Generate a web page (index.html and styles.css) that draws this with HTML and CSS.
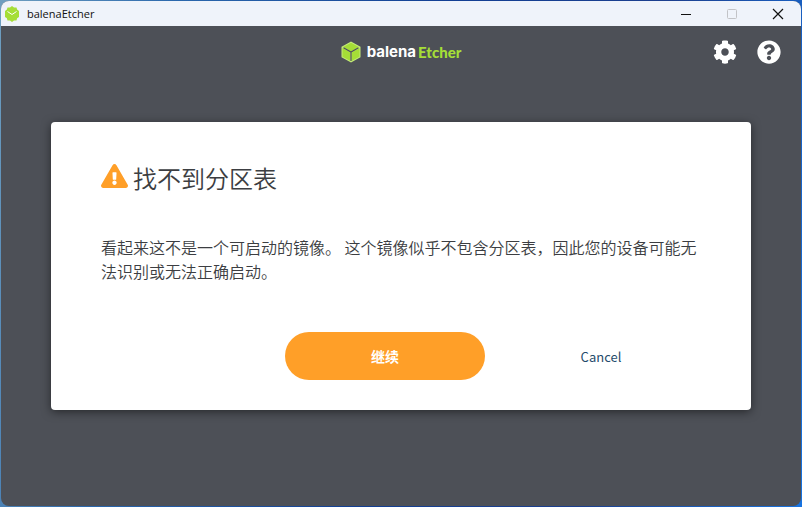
FILE: index.html
```html
<!DOCTYPE html>
<html lang="zh-CN">
<head>
<meta charset="utf-8">
<title>balenaEtcher</title>
<link rel="stylesheet" href="styles.css">
</head>
<body>
<div class="window">
  <header class="titlebar">
    <svg class="app-icon" viewBox="0 0 14 16" aria-hidden="true">
      <path d="M7 0l2 1.500 2.500.1.600 2L14 5v6l-1.900 1.300-.6 2.100-2.500.1L7 16l-2-1.500-2.500-.1-.6-2.100L0 11V5l1.900-1.400.6-2L5 1.500z" fill="#a5de37"/>
      <path d="M2.500 5.500L7 8.500l4.500-3" fill="none" stroke="#fff"/>
    </svg>
    <span class="titlebar-name">balenaEtcher</span>
    <div class="window-controls">
      <button type="button" aria-label="Minimize"><svg viewBox="0 0 12 12"><path d="M1 6.500h10" stroke="#111"/></svg></button>
      <button type="button" aria-label="Maximize" disabled><svg viewBox="0 0 12 12"><rect x="1.500" y="1.500" width="9" height="9" rx="1" fill="none" stroke="#c2c3c7"/></svg></button>
      <button type="button" aria-label="Close"><svg viewBox="0 0 12 12"><path d="M1 1l10 10M11 1L1 11" stroke="#111" stroke-width="1.200"/></svg></button>
    </div>
  </header>
  <div class="toolbar">
    <a class="brand" href="#">
      <svg class="brand-cube" viewBox="0 0 20 22" aria-hidden="true">
        <path d="M10 .5l9.500 5.200v10.600L10 21.500.5 16.300V5.700z" fill="#c5eb79"/>
        <path d="M10 1.800l7.800 4.300L10 10.500 2.200 6.100z" fill="#a5de37"/>
        <path d="M1.500 7l7.900 4.500v8.600l-7.900-4.400zM18.500 7l-7.900 4.500v8.600l7.900-4.400z" fill="#a5de37"/>
        <path d="M2.500 6.800l7.500 4.300 7.500-4.300M10 11.100v8.900" fill="none" stroke="#4d5057" stroke-width="1.200"/>
      </svg>
      <span class="brand-name">balena</span><span class="brand-product">Etcher</span>
    </a>
    <div class="toolbar-actions">
      <button type="button" aria-label="Settings">
        <svg viewBox="0 0 512 512"><path fill="#fff" d="M487.400 315.700l-42.600-24.600c4.300-23.200 4.300-47 0-70.200l42.600-24.600c4.900-2.800 7.100-8.600 5.500-14-11.100-35.600-30-67.800-54.700-94.600-3.800-4.100-10-5.100-14.800-2.300L380.800 110c-17.900-15.400-38.500-27.300-60.800-35.100V25.800c0-5.600-3.900-10.500-9.400-11.700-36.700-8.200-74.300-7.800-109.200 0-5.500 1.200-9.400 6.100-9.400 11.700V75c-22.200 7.900-42.800 19.800-60.800 35.100L88.700 85.500c-4.900-2.800-11-1.900-14.800 2.300-24.700 26.700-43.600 58.900-54.700 94.600-1.700 5.400.6 11.200 5.500 14L67.300 221c-4.300 23.200-4.300 47 0 70.200l-42.600 24.600c-4.900 2.800-7.100 8.600-5.500 14 11.100 35.600 30 67.800 54.700 94.600 3.800 4.100 10 5.100 14.800 2.300l42.600-24.600c17.900 15.400 38.500 27.300 60.800 35.100v49.200c0 5.600 3.900 10.500 9.400 11.700 36.700 8.200 74.300 7.800 109.200 0 5.500-1.200 9.400-6.100 9.400-11.700v-49.200c22.200-7.900 42.800-19.800 60.800-35.100l42.600 24.600c4.900 2.800 11 1.900 14.800-2.300 24.700-26.700 43.600-58.900 54.700-94.600 1.500-5.500-.7-11.300-5.600-14.100zM256 336c-44.100 0-80-35.900-80-80s35.900-80 80-80 80 35.900 80 80-35.900 80-80 80z"/></svg>
      </button>
      <button type="button" aria-label="Help">
        <svg viewBox="0 0 512 512"><path fill="#fff" d="M504 256c0 137-111 248-248 248S8 393 8 256C8 119.100 119 8 256 8s248 111.100 248 248zM262.700 90c-54.500 0-89.300 23-116.500 63.800-3.500 5.300-2.400 12.400 2.700 16.300l34.700 26.300c5.200 3.900 12.600 3 16.700-2.100 17.900-22.700 30.100-35.800 57.300-35.800 20.400 0 45.700 13.100 45.700 33 0 15-12.400 22.700-32.500 34C247.100 238.500 216 254.900 216 296v4c0 6.600 5.400 12 12 12h56c6.600 0 12-5.400 12-12v-1.300c0-28.500 83.200-29.600 83.200-106.700 0-58-60.200-102-116.500-102zM256 338c-25.400 0-46 20.600-46 46s20.600 46 46 46 46-20.600 46-46-20.600-46-46-46z"/></svg>
      </button>
    </div>
  </div>
  <main class="stage">
    <section class="dialog" role="alertdialog" aria-labelledby="dialog-title" aria-describedby="dialog-text">
      <h1 class="dialog-title">
        <svg viewBox="0 0 576 512" aria-hidden="true"><path fill="#ff9f28" d="M569.500 440c18.500 32-4.700 72-41.500 72H48c-36.900 0-60-40.100-41.600-72L246.400 24c18.500-32 64.700-32 83.200 0l239.900 416zM288 354c-25.400 0-46 20.600-46 46s20.600 46 46 46 46-20.600 46-46-20.600-46-46-46zm-43.700-165.300l7.400 136c.4 6.400 5.600 11.300 12 11.300h48.500c6.400 0 11.600-5 12-11.300l7.400-136c.4-6.900-5.100-12.700-12-12.700h-63.400c-6.900 0-12.300 5.800-11.900 12.700z"/></svg>
        <span id="dialog-title">找不到分区表</span>
      </h1>
      <p class="dialog-text" id="dialog-text">看起来这不是一个可启动的镜像。 这个镜像似乎不包含分区表，因此您的设备可能无法识别或无法正确启动。</p>
      <div class="dialog-actions">
        <button type="button" class="button button-warning">继续</button>
        <button type="button" class="button button-plain">Cancel</button>
      </div>
    </section>
  </main>
</div>
</body>
</html>
```
FILE: styles.css
```css
* {
  box-sizing: border-box;
}

body {
  margin: 0;
  min-height: 100vh;
  padding: 1px;
  display: flex;
  background: linear-gradient(100deg, #6f9fc0 0%, #2a67ac 20%, #123f94 50%, #1c3f8e 75%, #1773e0 100%);
  font-family: "Noto Sans CJK SC", sans-serif;
  color: #3c3e42;
}

button {
  padding: 0;
  border: 0;
  background: none;
  font-family: inherit;
  cursor: pointer;
}

.window {
  flex: 1;
  display: flex;
  flex-direction: column;
  border-radius: 8px;
  overflow: hidden;
  background: #4d5057;
}

.titlebar {
  display: flex;
  align-items: center;
  height: 25px;
  padding-left: 4px;
  background: #eff3fa;
}

.app-icon {
  width: 14px;
  height: 16px;
}

.titlebar-name {
  margin-left: 8px;
  font: 11px/16px "Open Sans", "Noto Sans", sans-serif;
  color: #111;
}

.window-controls {
  display: flex;
  margin-left: auto;
}

.window-controls button {
  width: 46px;
  height: 25px;
}

.window-controls svg {
  display: block;
  width: 12px;
  height: 12px;
  margin: 0 auto;
}

.toolbar {
  display: grid;
  grid-template-columns: 1fr auto 1fr;
  align-items: center;
  height: 52px;
  padding: 0 20px;
}

.brand {
  grid-column: 2;
  display: flex;
  align-items: center;
  text-decoration: none;
  font: 700 15px/20px Inter, sans-serif;
  color: #fff;
}

.brand-cube {
  width: 20px;
  height: 22px;
  margin-right: 6px;
}

.brand-product {
  margin-left: 2px;
  font-family: Lato, sans-serif;
  font-weight: 900;
  color: #a5de37;
}

.toolbar-actions {
  display: flex;
  justify-content: flex-end;
  gap: 20px;
}

.toolbar-actions svg {
  display: block;
  width: 24px;
  height: 24px;
}

.stage {
  flex: 1;
  padding: 44px 50px;
}

.dialog {
  padding: 36px 50px 30px;
  border-radius: 4px;
  background: #fff;
  box-shadow: 0 2px 10px rgba(0, 0, 0, 0.5);
}

.dialog-title {
  display: flex;
  align-items: center;
  gap: 5px;
  margin: 0;
  font-size: 24px;
  line-height: 40px;
  font-weight: 350;
}

.dialog-title svg {
  width: 27px;
  height: 24px;
  margin-bottom: 4px;
}

.dialog-text {
  margin: 37px 0 49px;
  font-size: 16px;
  line-height: 24px;
  font-weight: 350;
}

.dialog-actions {
  display: flex;
  justify-content: flex-end;
  gap: 16px;
}

.button {
  width: 200px;
  height: 48px;
  border-radius: 24px;
  font-size: 14px;
}

.button-warning {
  background: #ff9f28;
  color: #fff;
  font-weight: 700;
}

.button-plain {
  color: #1f4c6b;
  font-size: 13px;
  font-weight: 400;
}
```
